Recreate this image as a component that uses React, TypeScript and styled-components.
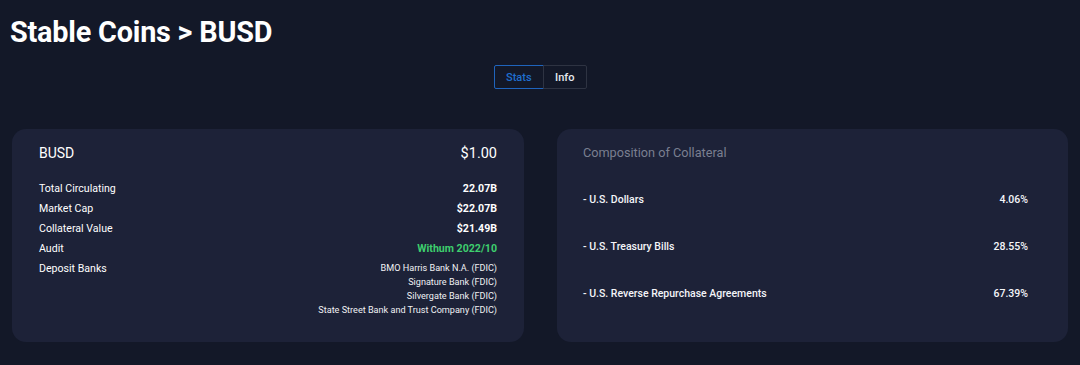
import styled, {createGlobalStyle} from "styled-components"

const GlobalStyle = createGlobalStyle`
	html, body {
		margin: 0;
		padding: 0;
		background: #131828;
		font-family: Roboto, "Liberation Sans", sans-serif;
		color: #ffffff;
	}
`

const Page = styled.div`
	width: 1080px;
	height: 365px;
	box-sizing: border-box;
	padding: 14px 12px 0 12px;
	display: flex;
	flex-direction: column;
`

const Title = styled.h1`
	margin: 0 0 0 -2px;
	font-size: 28.8px;
	font-weight: 700;
	line-height: 36px;
	letter-spacing: -0.2px;
`

const Tabs = styled.div`
	display: flex;
	justify-content: center;
	margin-top: 15px;
	margin-left: 1px;
`

const Tab = styled.button<{active?: boolean}>`
	height: 24px;
	padding: 0 ${p => (p.active ? "11px" : "11.5px")};
	background: transparent;
	font-family: Roboto, "Liberation Sans", sans-serif;
	font-size: 11px;
	font-weight: 500;
	color: ${p => (p.active ? "#1f6fd0" : "#e6e8ee")};
	border: 1px solid ${p => (p.active ? "#1f64bd" : "#2e3342")};
	border-radius: ${p => (p.active ? "2px 0 0 2px" : "0 2px 2px 0")};
	margin-left: ${p => (p.active ? "0" : "-1px")};
	cursor: pointer;
`

const Cards = styled.div`
	display: grid;
	grid-template-columns: 512px 511px;
	gap: 33px;
	margin-top: 40px;
`

const Card = styled.div`
	background: #1d2238;
	border-radius: 14px;
	height: 213px;
	box-sizing: border-box;
`

const LeftCard = styled(Card)`
	padding: 14px 27px 0 27px;
`

const RightCard = styled(Card)`
	padding: 14px 40px 0 26px;
`

const CardHeader = styled.div`
	display: flex;
	justify-content: space-between;
	align-items: center;
	height: 20px;
	font-size: 14px;
	margin-bottom: 16px;
`

const Price = styled.span`
	font-size: 14.5px;
`

const Row = styled.div`
	display: flex;
	justify-content: space-between;
	align-items: flex-start;
	font-size: 10.6px;
	line-height: 20px;
`

const Value = styled.span<{green?: boolean}>`
	font-weight: 700;
	color: ${p => (p.green ? "#3ecf6e" : "#ffffff")};
`

const Banks = styled.div`
	display: flex;
	flex-direction: column;
	align-items: flex-end;
	font-size: 9.1px;
	line-height: 14px;
	padding-top: 2px;
	color: #f0f1f4;
`

const SubTitle = styled.div`
	color: #7a7f90;
	font-size: 12.7px;
	line-height: 20px;
	margin-bottom: 30px;
`

const CompRow = styled.div`
	display: flex;
	justify-content: space-between;
	font-size: 10.5px;
	font-weight: 500;
	line-height: 14px;
	margin-bottom: 33px;
	color: #f4f5f8;
`

const stats = [
	{label: "Total Circulating", value: "22.07B"},
	{label: "Market Cap", value: "$22.07B"},
	{label: "Collateral Value", value: "$21.49B"},
	{label: "Audit", value: "Withum 2022/10", green: true},
]

const banks = [
	"BMO Harris Bank N.A. (FDIC)",
	"Signature Bank (FDIC)",
	"Silvergate Bank (FDIC)",
	"State Street Bank and Trust Company (FDIC)",
]

const composition = [
	{label: "- U.S. Dollars", value: "4.06%"},
	{label: "- U.S. Treasury Bills", value: "28.55%"},
	{label: "- U.S. Reverse Repurchase Agreements", value: "67.39%"},
]

const App = () => {
	return (
		<>
			<GlobalStyle />
			<Page>
				<Title>Stable Coins &gt; BUSD</Title>
				<Tabs>
					<Tab active>Stats</Tab>
					<Tab>Info</Tab>
				</Tabs>
				<Cards>
					<LeftCard>
						<CardHeader>
							<span>BUSD</span>
							<Price>$1.00</Price>
						</CardHeader>
						{stats.map(s => (
							<Row key={s.label}>
								<span>{s.label}</span>
								<Value green={s.green}>{s.value}</Value>
							</Row>
						))}
						<Row>
							<span>Deposit Banks</span>
							<Banks>
								{banks.map(b => (
									<span key={b}>{b}</span>
								))}
							</Banks>
						</Row>
					</LeftCard>
					<RightCard>
						<SubTitle>Composition of Collateral</SubTitle>
						{composition.map(c => (
							<CompRow key={c.label}>
								<span>{c.label}</span>
								<span>{c.value}</span>
							</CompRow>
						))}
					</RightCard>
				</Cards>
			</Page>
		</>
	)
}

export default App
